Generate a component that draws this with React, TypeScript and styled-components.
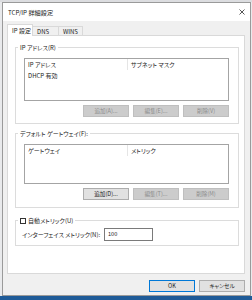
import React from "react";
import styled, { createGlobalStyle } from "styled-components";

const Global = createGlobalStyle`
  html, body { margin: 0; padding: 0; }
  body {
    background: #e4e6ea;
    font-family: "Noto Sans CJK JP", "Noto Sans", sans-serif;
    font-feature-settings: "palt";
    white-space: nowrap;
  }
  * { box-sizing: border-box; }
`;

const Screen = styled.div`
  width: 252px;
  height: 300px;
  display: flex;
  flex-direction: column;
  overflow: hidden;
  background: #e9eaec;
`;

const Backdrop = styled.div`
  height: 2px;
  background: #dcdde0;
`;

const Window = styled.div`
  margin: 0 1px 0 2px;
  height: 294px;
  border: 1px solid #9a9a9a;
  background: #f0f0f0;
  display: flex;
  flex-direction: column;
`;

const TitleBar = styled.div`
  height: 18px;
  flex: none;
  background: #ffffff;
  display: flex;
  align-items: center;
  justify-content: space-between;
  padding: 0 5px 0 5px;
  font-size: 6.2px;
  line-height: 9px;
  color: #222;
`;

const CloseIcon = styled.svg`
  width: 6px;
  height: 6px;
  margin-bottom: 1px;
`;

const Client = styled.div`
  flex: 1;
  display: flex;
  flex-direction: column;
  padding: 3px 5px 0 4px;
`;

const TabRow = styled.div`
  display: flex;
  align-items: flex-end;
  height: 12px;
  margin-bottom: -1px;
  position: relative;
  z-index: 1;
`;

const Tab = styled.div<{ $active?: boolean; $w: number }>`
  width: ${(p) => p.$w}px;
  height: ${(p) => (p.$active ? 12 : 10)}px;
  border: 1px solid #d9d9d9;
  border-bottom: ${(p) => (p.$active ? "none" : "1px solid #d9d9d9")};
  border-left: ${(p) => (p.$active ? "1px solid #d9d9d9" : "none")};
  background: ${(p) => (p.$active ? "#ffffff" : "#f0f0f0")};
  font-size: 6px;
  line-height: 9px;
  padding-left: 4px;
  padding-top: ${(p) => (p.$active ? 1 : 0)}px;
  color: #222;
  overflow: hidden;
`;

const Panel = styled.div`
  height: 239px;
  flex: none;
  background: #ffffff;
  border: 1px solid #d9d9d9;
  padding: 0 5px 0 7px;
  display: flex;
  flex-direction: column;
`;

const Group = styled.div<{ $mt: number }>`
  margin-top: ${(p) => p.$mt}px;
  border: 1px solid #dcdcdc;
`;

const Legend = styled.div`
  margin: -5px 0 0 2px;
  padding: 0 2px;
  width: fit-content;
  background: #ffffff;
  font-size: 6px;
  line-height: 9px;
  color: #222;
  display: flex;
  align-items: center;
  gap: 2px;
`;

const GroupBody = styled.div<{ $pt: number; $pb: number; $pl: number }>`
  padding: ${(p) => p.$pt}px 9px ${(p) => p.$pb}px ${(p) => p.$pl}px;
`;

const ListView = styled.div<{ $h: number }>`
  height: ${(p) => p.$h}px;
  border: 1px solid #a4a4a4;
  background: #ffffff;
  display: flex;
  flex-direction: column;
`;

const HeaderRow = styled.div`
  display: flex;
  height: 11px;
  font-size: 6px;
  line-height: 11px;
  color: #222;
`;

const HeaderCell = styled.div<{ $w?: number }>`
  width: ${(p) => (p.$w ? `${p.$w}px` : "auto")};
  flex: ${(p) => (p.$w ? "none" : "1")};
  padding-left: 3px;
  border-right: ${(p) => (p.$w ? "1px solid #e5e5e5" : "none")};
`;

const Row = styled.div`
  height: 11px;
  font-size: 6px;
  line-height: 11px;
  padding-left: 3px;
  color: #222;
`;

const ButtonRow = styled.div`
  display: flex;
  justify-content: flex-end;
  gap: 4px;
  margin-top: 4px;
`;

const Button = styled.div<{ $disabled?: boolean; $default?: boolean }>`
  width: 46px;
  height: 12px;
  border: 1px solid
    ${(p) => (p.$default ? "#0078d7" : p.$disabled ? "#bfbfbf" : "#adadad")};
  background: ${(p) => (p.$disabled ? "#cccccc" : "#e1e1e1")};
  color: ${(p) => (p.$disabled ? "#8d8d8d" : "#222")};
  font-size: 5.6px;
  line-height: 10px;
  text-align: center;
`;

const CheckBox = styled.span`
  display: inline-block;
  width: 6px;
  height: 6px;
  border: 1px solid #333333;
  background: #fff;
`;

const FieldRow = styled.div`
  display: flex;
  align-items: center;
`;

const FieldLabel = styled.div`
  width: 82px;
  flex: none;
  font-size: 6px;
  line-height: 9px;
  color: #222;
`;

const Input = styled.div`
  width: 49px;
  height: 13px;
  border: 1px solid #7a7a7a;
  background: #fff;
  font-size: 5.6px;
  line-height: 11px;
  padding-left: 3px;
  color: #222;
`;

const Footer = styled.div`
  display: flex;
  justify-content: flex-end;
  gap: 4px;
  margin-top: 6px;
`;

const Taskbar = styled.div`
  flex: 1;
  background: #1f5b98;
`;

export default function App() {
  return (
    <>
      <Global />
      <Screen>
        <Backdrop />
        <Window>
          <TitleBar>
            <span>TCP/IP 詳細設定</span>
            <CloseIcon viewBox="0 0 6 6">
              <path d="M0.5 0.5 L5.5 5.5 M5.5 0.5 L0.5 5.5" stroke="#444" strokeWidth="0.9" />
            </CloseIcon>
          </TitleBar>
          <Client>
            <TabRow>
              <Tab $active $w={26}>IP 設定</Tab>
              <Tab $w={26}>DNS</Tab>
              <Tab $w={24}>WINS</Tab>
            </TabRow>
            <Panel>
              <Group $mt={11}>
                <Legend>IP アドレス(R)</Legend>
                <GroupBody $pt={6} $pb={6} $pl={8}>
                  <ListView $h={43}>
                    <HeaderRow>
                      <HeaderCell $w={103}>IP アドレス</HeaderCell>
                      <HeaderCell>サブネット マスク</HeaderCell>
                    </HeaderRow>
                    <Row>DHCP 有効</Row>
                  </ListView>
                  <ButtonRow>
                    <Button $disabled>追加(A)...</Button>
                    <Button $disabled>編集(E)...</Button>
                    <Button $disabled>削除(V)</Button>
                  </ButtonRow>
                </GroupBody>
              </Group>
              <Group $mt={9}>
                <Legend>デフォルト ゲートウェイ(F):</Legend>
                <GroupBody $pt={6} $pb={7} $pl={8}>
                  <ListView $h={40}>
                    <HeaderRow>
                      <HeaderCell $w={103}>ゲートウェイ</HeaderCell>
                      <HeaderCell>メトリック</HeaderCell>
                    </HeaderRow>
                  </ListView>
                  <ButtonRow>
                    <Button>追加(D)...</Button>
                    <Button $disabled>編集(T)...</Button>
                    <Button $disabled>削除(M)</Button>
                  </ButtonRow>
                </GroupBody>
              </Group>
              <Group $mt={12}>
                <Legend>
                  <CheckBox />
                  自動メトリック(U)
                </Legend>
                <GroupBody $pt={3} $pb={4} $pl={6}>
                  <FieldRow>
                    <FieldLabel>インターフェイス メトリック(N):</FieldLabel>
                    <Input>100</Input>
                  </FieldRow>
                </GroupBody>
              </Group>
            </Panel>
            <Footer>
              <Button $default>OK</Button>
              <Button>キャンセル</Button>
            </Footer>
          </Client>
        </Window>
        <Taskbar />
      </Screen>
    </>
  );
}
